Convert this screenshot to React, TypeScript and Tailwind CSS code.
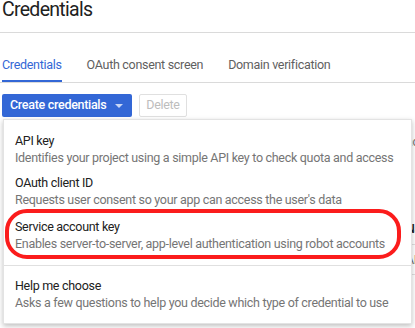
import { useState } from "react";

const options = [
    { title: "API key", text: "Identifies your project using a simple API key to check quota and access" },
    { title: "OAuth client ID", text: "Requests user consent so your app can access the user's data" },
];

export default function App() {
    const [tab] = useState(0);
    const tabs = ["Credentials", "OAuth consent screen", "Domain verification"];

    return (
        <div className="relative w-[415px] h-[328px] overflow-hidden bg-white font-['Roboto',_'Liberation_Sans',_sans-serif] tracking-[-0.3px]">
            <h1 className="h-[33px] pl-[2px] text-[19.5px] tracking-[-0.7px] leading-[20px] text-[#212121] border-b border-[#dadada]">
                Credentials
            </h1>

            <div className="flex gap-[25px] mt-[23px] pl-[2px] border-b border-[#dadada]">
                {tabs.map((t, i) => (
                    <div
                        key={t}
                        className={
                            i === tab
                                ? "pb-[6px] text-[12.5px] leading-[18px] text-[#3367d6] border-b-2 border-[#3367d6]"
                                : "pb-[8px] text-[12.5px] leading-[18px] text-[#5f5f5f]"
                        }
                    >
                        {t}
                    </div>
                ))}
            </div>

            <div className="flex gap-[7px] mt-[11px] pl-[2px]">
                <button className="flex items-center h-[23px] w-[130px] pl-[8px] gap-[9px] bg-[#3367d6] text-white text-[12.5px] font-medium rounded-[2px] whitespace-nowrap">
                    Create credentials
                    <svg width="8" height="4" viewBox="0 0 8 4">
                        <path d="M0 0h8L4 4z" fill="#c8d6f5" />
                    </svg>
                </button>
                <button className="h-[23px] w-[48px] border border-[#e0e0e0] text-[12.5px] text-[#bdbdbd] rounded-[2px]">
                    Delete
                </button>
            </div>

            {/* page content hidden under the menu */}
            <div className="flex flex-col pl-[406px] mt-[16px] text-[12.5px] leading-[17px] whitespace-nowrap">
                <p className="text-[#757575]">access</p>
                <div className="mt-[70px] pb-[7px] font-medium text-[#212121] border-b border-[#e0e0e0]">Name</div>
                <div className="py-[6px] text-[#757575] border-b border-[#e0e0e0]">API</div>
            </div>

            {/* dropdown menu */}
            <div className="absolute left-[3px] top-[119px] w-[409px] h-[205px] pt-[8px] bg-white border border-[#e3e3e3] shadow-[0_2px_5px_rgba(0,0,0,0.25)] text-[12.5px] leading-[17px] whitespace-nowrap">
                {options.map((o) => (
                    <div key={o.title} className="py-[4px] pl-[11px]">
                        <div className="text-[#212121]">{o.title}</div>
                        <div className="text-[#757575]">{o.text}</div>
                    </div>
                ))}
                <div className="mt-[2px] pt-[4px] pb-[13px] pl-[11px] border-b border-[#e0e0e0]">
                    <div className="text-[#212121]">Service account key</div>
                    <div className="text-[#757575]">Enables server-to-server, app-level authentication using robot accounts</div>
                </div>
                <div className="pt-[11px] pl-[11px]">
                    <div className="text-[#212121]">Help me choose</div>
                    <div className="text-[#757575]">Asks a few questions to help you decide which type of credential to use</div>
                </div>
            </div>

            {/* annotation */}
            <div className="absolute left-[5px] top-[209px] w-[396px] h-[50px] rounded-[22px] border-4 border-[#fb1c1c]" />
        </div>
    );
}
